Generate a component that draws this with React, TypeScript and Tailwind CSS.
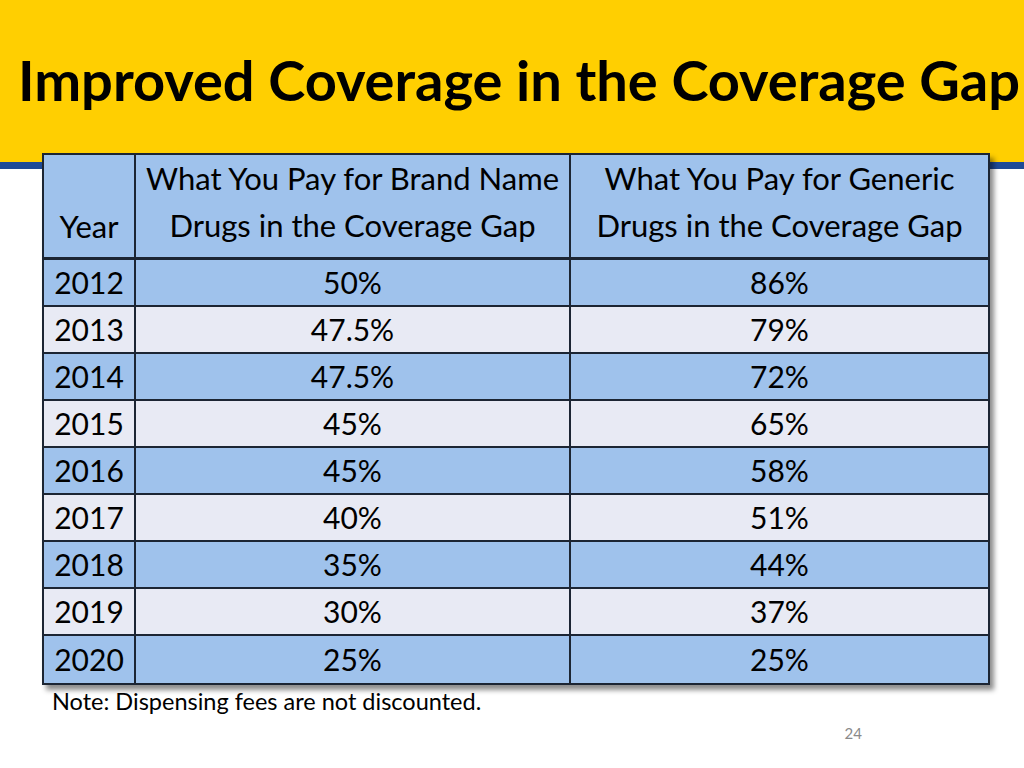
import * as React from "react"

const rows: [string, string, string][] = [
  ["2012", "50%", "86%"],
  ["2013", "47.5%", "79%"],
  ["2014", "47.5%", "72%"],
  ["2015", "45%", "65%"],
  ["2016", "45%", "58%"],
  ["2017", "40%", "51%"],
  ["2018", "35%", "44%"],
  ["2019", "30%", "37%"],
  ["2020", "25%", "25%"],
]

export default function App() {
  return (
    <div className="relative w-[1024px] h-[768px] overflow-hidden bg-white font-['Lato',sans-serif] text-black">
      {/* title band */}
      <div className="h-[162px] bg-[#ffcf01] flex items-center pl-[18px] pb-[2px]">
        <h1 className="text-[56px] font-bold leading-none whitespace-nowrap">
          Improved Coverage in the Coverage Gap
        </h1>
      </div>
      <div className="h-[7px] bg-[#1e4b97]" />

      {/* table */}
      <div className="-mt-[16px] ml-[42px] w-[948px] shadow-[4px_5px_5px_rgba(0,0,0,0.45)]">
        <div className="border-2 border-[#1c2533]">
          <div className="grid grid-cols-[92px_435px_1fr] h-[105px] bg-[#9fc2ec] border-b-[3px] border-[#1c2533] text-[31px] leading-[47px]">
            <div className="flex items-end justify-center pb-[8px] border-r-2 border-[#1c2533]">Year</div>
            <div className="flex flex-col items-center justify-center pb-[9px] border-r-2 border-[#1c2533] whitespace-nowrap">
              <span>What You Pay for Brand Name</span>
              <span>Drugs in the Coverage Gap</span>
            </div>
            <div className="flex flex-col items-center justify-center pb-[9px] whitespace-nowrap">
              <span>What You Pay for Generic</span>
              <span>Drugs in the Coverage Gap</span>
            </div>
          </div>
          {rows.map(([year, brand, generic], i) => (
            <div
              key={year}
              className={`grid grid-cols-[92px_435px_1fr] h-[47px] text-[30px] ${
                i % 2 === 0 ? "bg-[#9fc2ec]" : "bg-[#e8eaf4]"
              } ${i < rows.length - 1 ? "border-b-2 border-[#1c2533]" : ""}`}
            >
              <div className="flex items-center justify-center border-r-2 border-[#1c2533]">{year}</div>
              <div className="flex items-center justify-center border-r-2 border-[#1c2533]">{brand}</div>
              <div className="flex items-center justify-center">{generic}</div>
            </div>
          ))}
        </div>
      </div>

      <div className="flex justify-between items-start">
        <p className="ml-[52px] mt-[1px] text-[23.5px] leading-[30px]">Note: Dispensing fees are not discounted.</p>
        <span className="mr-[162px] mt-[37px] text-[15px] text-[#8a8a8a]">24</span>
      </div>
    </div>
  )
}
